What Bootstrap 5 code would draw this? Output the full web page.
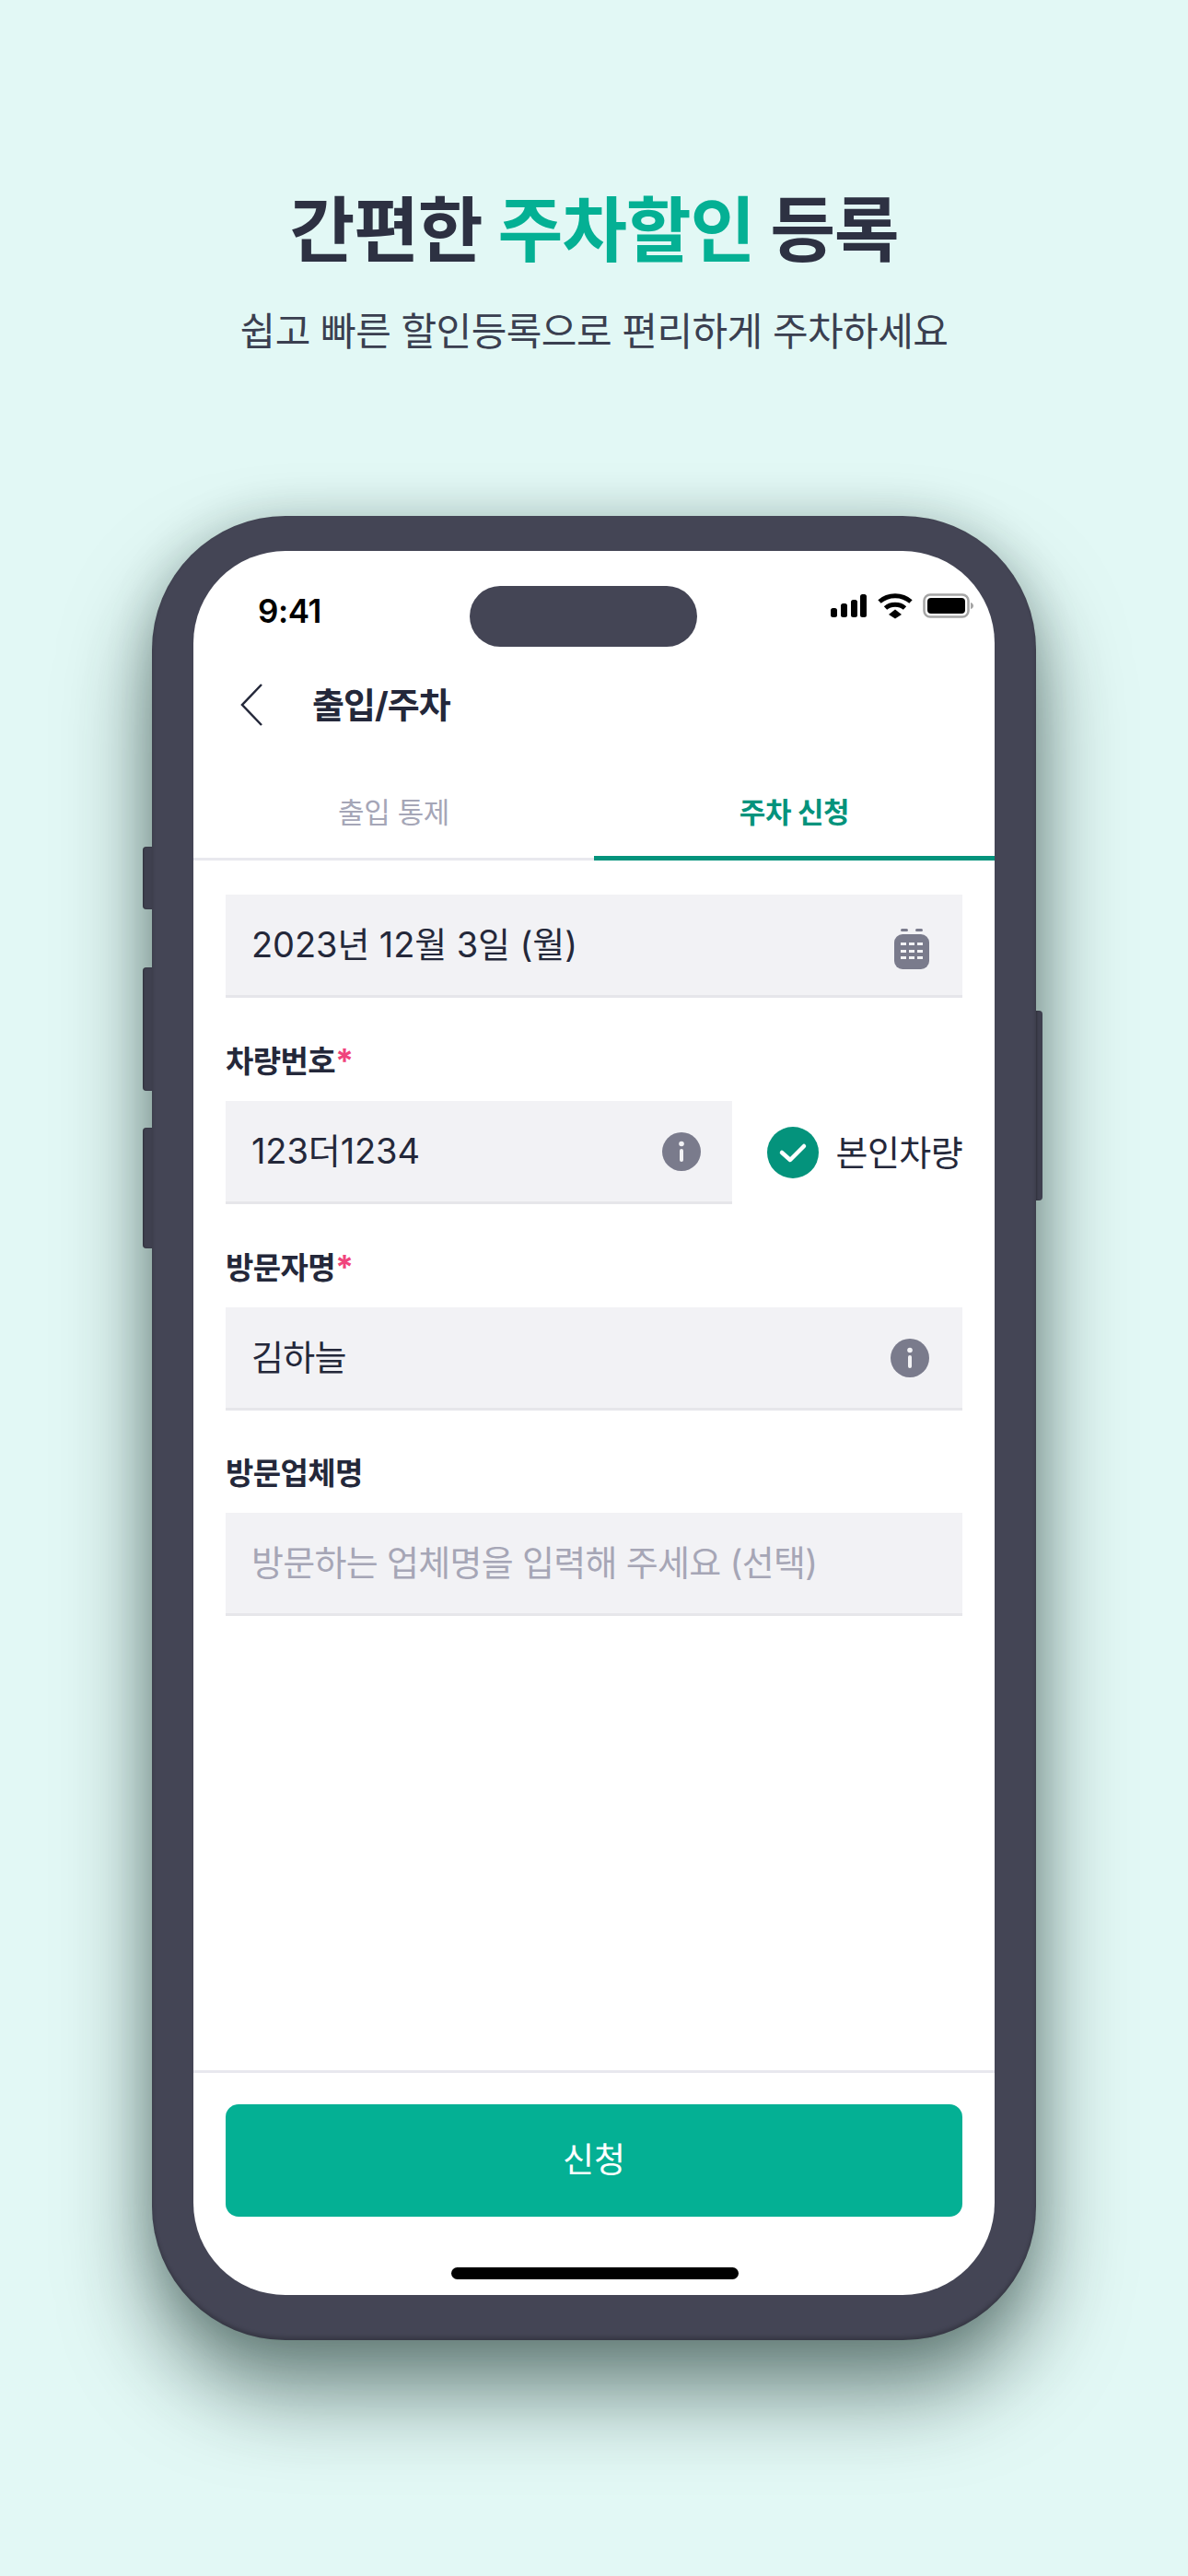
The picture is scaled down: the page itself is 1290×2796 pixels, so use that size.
<!DOCTYPE html>
<html lang="ko">
<head>
<meta charset="utf-8">
<title>주차할인</title>
<link href="https://cdn.jsdelivr.net/npm/bootstrap@5.3.0/dist/css/bootstrap.min.css" rel="stylesheet">
<style>
html,body{margin:0;background:#e2f8f5;}
body{font-family:Inter,"Noto Sans CJK KR","Noto Sans",sans-serif;color:#24283a;width:1290px;height:2796px;overflow:hidden;}
.hero{padding-top:194px;height:560px;text-align:center;}
.hero-title{font-size:77px;font-weight:700;line-height:112px;letter-spacing:-1.2px;color:#2d3142;margin:0;}
.hero-title em{font-style:normal;color:#04b094;}
.hero-sub{font-size:42px;line-height:60px;letter-spacing:-.55px;color:#3a3f50;margin:24px 0 0;font-weight:400;}
.phone-body{position:relative;width:960px;height:1980px;margin:0 0 0 165px;padding:38px 45px 49px;background:#444555;border-radius:145px;box-shadow:0 55px 95px rgba(10,35,30,.55),0 0 50px rgba(10,40,35,.18),inset 0 -3px 4px rgba(0,0,0,.22);}
.side-key{position:absolute;background:#3f404f;box-shadow:inset 1px 0 2px rgba(0,0,0,.25);}
.key-a{left:-10px;top:359px;width:10px;height:68px;border-radius:4px 0 0 4px;}
.key-b{left:-10px;top:490px;width:10px;height:134px;border-radius:4px 0 0 4px;}
.key-c{left:-10px;top:664px;width:10px;height:131px;border-radius:4px 0 0 4px;}
.key-d{right:-7px;top:537px;width:7px;height:206px;border-radius:0 4px 4px 0;}
.screen{position:relative;height:1893px;background:#fff;border-radius:100px;overflow:hidden;}
.island{position:absolute;left:300px;top:38px;width:247px;height:66px;background:#444555;border-radius:33px;}
.status{height:128px;padding:45px 23px 0 70px;}
.clock{font-weight:600;font-size:35px;line-height:40px;color:#000;letter-spacing:-.4px;}
.topbar{height:78px;padding-left:51px;}
.topbar-title{font-size:38px;font-weight:700;letter-spacing:-1px;margin-left:54px;color:#24283a;}
.tabs{height:96px;margin-top:34px;border-bottom:3px solid #e8e8ee;}
.tabs .nav-link{flex:1 1 50%;padding:0;height:96px;line-height:88px;font-size:31px;letter-spacing:-.4px;color:#a5a6b7;border-radius:0;margin-bottom:-3px;}
.tabs .nav-link.active{color:#04937c;font-weight:700;border-bottom:5px solid #04937c;}
.form-area{flex:1 1 auto;padding:37px 35px 0;}
.fld{height:112px;background:#f2f2f5;border-bottom:3px solid #e6e6ea;padding:0 36px 0 28px;font-size:38px;letter-spacing:-.7px;color:#24283a;}
.fld-ph{color:#a6a6b6;}
.fld-num{width:550px;padding-right:34px;}
.digits{letter-spacing:-.1px;}
.cal-ico{margin-top:8px;}
.lbl{font-size:33px;font-weight:700;line-height:48px;letter-spacing:-.6px;color:#24283a;margin:44px 0 19px;}
.lbl-star{color:#f0447c;font-size:36px;}
.own{font-size:38px;letter-spacing:-.6px;gap:19px;}
.foot{border-top:3px solid #e8e8ee;padding:34px 35px 0;height:244px;}
.apply{display:block;width:100%;height:122px;background:#04b094;border:0;border-radius:14px;color:#fff;font-size:37px;}
.apply:hover{background:#04b094;color:#fff;}
.home-bar{width:312px;height:13px;background:#000;border-radius:7px;margin:55px 0 0 245px;}
</style>
</head>
<body>
<header class="hero">
  <h1 class="hero-title">간편한 <em>주차할인</em> 등록</h1>
  <p class="hero-sub">쉽고 빠른 할인등록으로 편리하게 주차하세요</p>
</header>
<div class="phone-body">
  <span class="side-key key-a"></span><span class="side-key key-b"></span><span class="side-key key-c"></span><span class="side-key key-d"></span>
  <div class="screen d-flex flex-column">
    <div class="island"></div>
    <div class="status d-flex justify-content-between align-items-start">
      <span class="clock">9:41</span>
      <svg width="156" height="30" viewBox="0 0 156 30" xmlns="http://www.w3.org/2000/svg" class="d-block">
        <g fill="#000">
          <rect x="1" y="17" width="7" height="10" rx="2.5"/><rect x="12" y="12" width="7" height="15" rx="2.5"/><rect x="23" y="8" width="7" height="19" rx="2.5"/><rect x="33" y="2" width="7" height="25" rx="2.5"/>
          <path d="M71 18.500l-7 5.500 7 4.500 7-4.500z"/>
        </g>
        <g fill="none" stroke="#000" stroke-width="5">
          <path d="M54 10c9.500-8.500 24.500-8.500 34 0"/>
          <path d="M60.500 17c5.600-5 15.400-5 21 0"/>
        </g>
        <rect x="102.500" y="2.500" width="48" height="24" rx="6.500" fill="none" stroke="#a5a5a5" stroke-width="2.500"/>
        <rect x="106" y="6" width="41" height="17" rx="4" fill="#000"/>
        <path d="M153 11c2 .5 3 2 3 3.500s-1 3-3 3.500z" fill="#a5a5a5"/>
      </svg>
    </div>
    <div class="topbar d-flex align-items-center">
      <svg width="24" height="46" viewBox="0 0 24 46" xmlns="http://www.w3.org/2000/svg"><path d="M23 1L2 23l21 22" fill="none" stroke="#24283a" stroke-width="2.500"/></svg>
      <span class="topbar-title">출입/주차</span>
    </div>
    <nav class="tabs nav text-center">
      <a class="nav-link" href="#">출입 통제</a>
      <a class="nav-link active" href="#">주차 신청</a>
    </nav>
    <main class="form-area">
      <div class="fld d-flex align-items-center justify-content-between">
        <span class="digits">2023년 12월 3일 (월)</span>
        <svg width="38" height="44" viewBox="0 0 38 44" xmlns="http://www.w3.org/2000/svg" class="d-block cal-ico">
          <rect x="7" y="0" width="8" height="3" rx="1.500" fill="#7a7b8c"/><rect x="23" y="0" width="8" height="3" rx="1.500" fill="#7a7b8c"/>
          <rect x="0" y="6" width="38" height="38" rx="9" fill="#7a7b8c"/>
          <g fill="#f2f2f5"><rect x="7" y="15" width="6" height="3"/><rect x="16" y="15" width="6" height="3"/><rect x="25" y="15" width="6" height="3"/><rect x="7" y="23" width="6" height="3"/><rect x="16" y="23" width="6" height="3"/><rect x="25" y="23" width="6" height="3"/><rect x="7" y="30" width="6" height="3"/><rect x="16" y="30" width="6" height="3"/><rect x="25" y="30" width="6" height="3"/></g>
        </svg>
      </div>
      <div class="lbl">차량번호<span class="lbl-star">*</span></div>
      <div class="d-flex align-items-center justify-content-between">
        <div class="fld fld-num d-flex align-items-center justify-content-between">
          <span class="digits">123더1234</span>
          <svg width="42" height="42" viewBox="0 0 42 42" xmlns="http://www.w3.org/2000/svg" class="d-block"><circle cx="21" cy="21" r="21" fill="#7a7b8c"/><circle cx="21" cy="12.500" r="2.800" fill="#f2f2f5"/><rect x="19" y="18" width="4" height="14" rx="2" fill="#f2f2f5"/></svg>
        </div>
        <div class="own d-flex align-items-center">
          <svg width="56" height="56" viewBox="0 0 56 56" xmlns="http://www.w3.org/2000/svg" class="d-block"><circle cx="28" cy="28" r="28" fill="#04937c"/><path d="M16 28l9 8 15-15" fill="none" stroke="#fff" stroke-width="4.500" stroke-linecap="round" stroke-linejoin="round"/></svg>
          <span>본인차량</span>
        </div>
      </div>
      <div class="lbl">방문자명<span class="lbl-star">*</span></div>
      <div class="fld d-flex align-items-center justify-content-between">
        <span>김하늘</span>
        <svg width="42" height="42" viewBox="0 0 42 42" xmlns="http://www.w3.org/2000/svg" class="d-block"><circle cx="21" cy="21" r="21" fill="#7a7b8c"/><circle cx="21" cy="12.500" r="2.800" fill="#f2f2f5"/><rect x="19" y="18" width="4" height="14" rx="2" fill="#f2f2f5"/></svg>
      </div>
      <div class="lbl">방문업체명</div>
      <div class="fld fld-ph d-flex align-items-center"><span>방문하는 업체명을 입력해 주세요 (선택)</span></div>
    </main>
    <footer class="foot">
      <button type="button" class="btn apply">신청</button>
      <div class="home-bar"></div>
    </footer>
  </div>
</div>
<script src="https://cdn.jsdelivr.net/npm/bootstrap@5.3.0/dist/js/bootstrap.bundle.min.js"></script>
</body>
</html>
